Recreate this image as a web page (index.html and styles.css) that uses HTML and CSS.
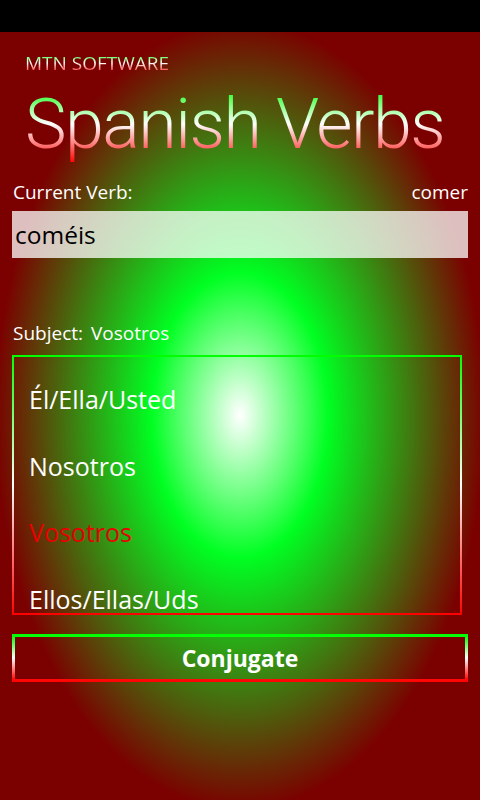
FILE: index.html
```html
<!DOCTYPE html>
<html>
<head>
<meta charset="utf-8">
<link rel="stylesheet" href="styles.css">
</head>
<body>
<div class="status"></div>
<div class="app">
  <div class="header">
    <div class="company grad-text">MTN SOFTWARE</div>
    <div class="title grad-text">Spanish Verbs</div>
  </div>
  <div class="verb-row">
    <span>Current Verb:</span>
    <span>comer</span>
  </div>
  <div class="input">coméis</div>
  <div class="subject"><span>Subject:</span><span class="subject-value">Vosotros</span></div>
  <div class="list">
    <div class="item">Él/Ella/Usted</div>
    <div class="item">Nosotros</div>
    <div class="item selected">Vosotros</div>
    <div class="item">Ellos/Ellas/Uds</div>
  </div>
  <div class="button">Conjugate</div>
</div>
</body>
</html>
```
FILE: styles.css
```css
html, body {
  margin: 0;
  padding: 0;
  background: #000;
}
body {
  width: 480px;
  height: 800px;
  overflow: hidden;
  font-family: "Open Sans", "Noto Sans", sans-serif;
  color: #fff;
}
.status {
  height: 32px;
  background: #000;
}
.app {
  height: 768px;
  display: flex;
  flex-direction: column;
  background: radial-gradient(ellipse 245px 395px at 240px 383px, #ffffff 0%, #00ff22 36%, #7b0000 100%);
  background-color: #7b0000;
}
.header {
  padding: 20px 0 0 25px;
  display: flex;
  flex-direction: column;
  align-items: flex-start;
}
.grad-text {
  background: linear-gradient(#00ff00, #ffffff 50%, #ff0000);
  -webkit-background-clip: text;
  background-clip: text;
  color: transparent;
}
.company {
  font-size: 19px;
  line-height: 22px;
  white-space: nowrap;
}
.title {
  margin-top: 11px;
  font-family: Roboto, "Open Sans", sans-serif;
  font-size: 70px;
  font-weight: 300;
  line-height: 78px;
  letter-spacing: -1.5px;
  white-space: nowrap;
}
.verb-row {
  margin-top: 17px;
  padding: 0 12px 0 13px;
  display: flex;
  justify-content: space-between;
  font-size: 19px;
  line-height: 24px;
}
.input {
  margin: 7px 12px 0 12px;
  height: 47px;
  line-height: 47px;
  padding-left: 3px;
  background: rgba(255, 255, 255, 0.75);
  color: #000;
  font-size: 24.5px;
}
.subject {
  margin-top: 63px;
  padding-left: 13px;
  font-size: 19px;
  line-height: 24px;
  display: flex;
  gap: 8px;
}
.list {
  margin: 10px 0 0 12px;
  width: 450px;
  height: 260px;
  box-sizing: border-box;
  border: 2px solid;
  border-image: linear-gradient(#00ff00, #ffffff 50%, #ff0000) 1;
  padding: 9px 0 0 15px;
  overflow: hidden;
}
.item {
  font-size: 25px;
  line-height: 66.5px;
  white-space: nowrap;
}
.item.selected {
  color: #e80000;
}
.button {
  margin: 19px 12px 0 12px;
  height: 48px;
  box-sizing: border-box;
  border: 3px solid;
  border-image: linear-gradient(#00ff00, #ffffff 50%, #ff0000) 1;
  display: flex;
  align-items: center;
  justify-content: center;
  font-size: 23px;
  font-weight: 700;
}
```
